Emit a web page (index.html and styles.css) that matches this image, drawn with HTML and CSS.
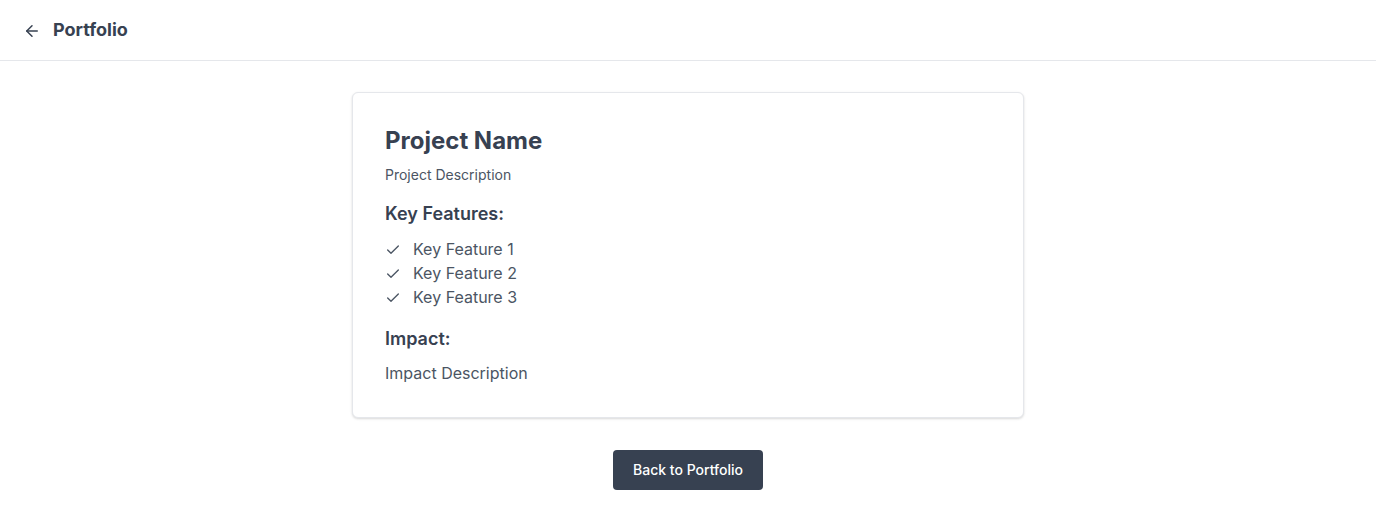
FILE: index.html
```html
<!DOCTYPE html>
<html lang="en">
<head>
<meta charset="utf-8">
<title>Project</title>
<link rel="stylesheet" href="styles.css">
</head>
<body>
<header class="topbar">
  <button class="back-icon" aria-label="Back">
    <svg width="18" height="18" viewBox="0 0 24 24" fill="none" stroke="currentColor" stroke-width="2" stroke-linecap="round" stroke-linejoin="round"><path d="m12 19-7-7 7-7"/><path d="M19 12H5"/></svg>
  </button>
  <h1 class="topbar-title">Portfolio</h1>
</header>
<main class="main">
  <section class="card">
    <h2 class="project-name">Project Name</h2>
    <p class="project-desc">Project Description</p>
    <h3 class="section-title">Key Features:</h3>
    <ul class="features">
      <li class="feature"><svg class="check" width="16" height="16" viewBox="0 0 24 24" fill="none" stroke="currentColor" stroke-width="2" stroke-linecap="round" stroke-linejoin="round"><path d="M20 6 9 17l-5-5"/></svg><span>Key Feature 1</span></li>
      <li class="feature"><svg class="check" width="16" height="16" viewBox="0 0 24 24" fill="none" stroke="currentColor" stroke-width="2" stroke-linecap="round" stroke-linejoin="round"><path d="M20 6 9 17l-5-5"/></svg><span>Key Feature 2</span></li>
      <li class="feature"><svg class="check" width="16" height="16" viewBox="0 0 24 24" fill="none" stroke="currentColor" stroke-width="2" stroke-linecap="round" stroke-linejoin="round"><path d="M20 6 9 17l-5-5"/></svg><span>Key Feature 3</span></li>
    </ul>
    <h3 class="section-title">Impact:</h3>
    <p class="impact">Impact Description</p>
  </section>
  <button class="primary-btn">Back to Portfolio</button>
</main>
</body>
</html>
```

FILE: styles.css
```css
* { box-sizing: border-box; }
html, body { margin: 0; padding: 0; background: #ffffff; }
body {
  font-family: Inter, "Noto Sans", "Liberation Sans", sans-serif;
  color: #374151;
}
.topbar {
  height: 61px;
  display: flex;
  align-items: center;
  padding: 0 16px;
  border-bottom: 1px solid #e5e7eb;
  gap: 12px;
}
.back-icon {
  border: none;
  background: transparent;
  padding: 0;
  width: 18px;
  height: 18px;
  display: flex;
  align-items: center;
  justify-content: center;
  color: #374151;
  margin-left: 7px;
  margin-top: 2px;
}
.topbar-title {
  margin: 0;
  font-size: 18px;
  line-height: 28px;
  font-weight: 700;
  color: #374151;
}
.main {
  display: flex;
  flex-direction: column;
  align-items: center;
  padding: 31px 16px;
  gap: 32px;
}
.card {
  width: 672px;
  border: 1px solid #e5e7eb;
  border-radius: 6px;
  box-shadow: 0 1px 3px rgba(0,0,0,0.1), 0 1px 2px rgba(0,0,0,0.06);
  padding: 32px;
  background: #fff;
}
.project-name {
  margin: 0 0 8px;
  font-size: 24px;
  line-height: 32px;
  font-weight: 700;
  color: #374151;
}
.project-desc {
  margin: 0 0 15px;
  font-size: 14px;
  line-height: 20px;
  color: #4b5563;
}
.section-title {
  margin: 0 0 9px;
  font-size: 18px;
  line-height: 28px;
  font-weight: 600;
  color: #374151;
}
.features {
  list-style: none;
  margin: 0 0 16px;
  padding: 0;
}
.feature {
  display: flex;
  align-items: center;
  gap: 12px;
  font-size: 16px;
  line-height: 24px;
  color: #4b5563;
}
.check { color: #4b5563; flex: none; margin-top: 2px; }
.impact {
  margin: -1px 0 0;
  font-size: 16px;
  line-height: 24px;
  color: #4b5563;
}
.primary-btn {
  border: none;
  background: #374151;
  color: #ffffff;
  font-family: inherit;
  font-size: 14px;
  line-height: 20px;
  font-weight: 500;
  padding: 10px 20px;
  border-radius: 4px;
  width: 150px;
}
```
